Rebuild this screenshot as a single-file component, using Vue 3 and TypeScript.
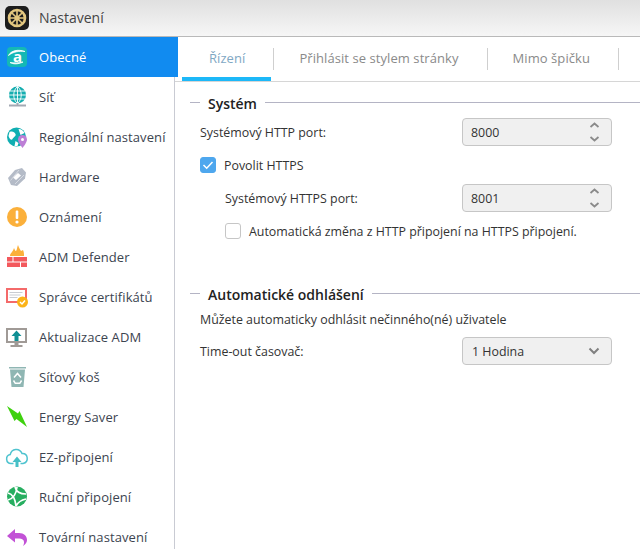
<script setup lang="ts">
const navItems = [
  { label: 'Obecné', icon: 'general', active: true },
  { label: 'Síť', icon: 'network' },
  { label: 'Regionální nastavení', icon: 'region' },
  { label: 'Hardware', icon: 'hardware' },
  { label: 'Oznámení', icon: 'notice' },
  { label: 'ADM Defender', icon: 'defender' },
  { label: 'Správce certifikátů', icon: 'cert' },
  { label: 'Aktualizace ADM', icon: 'update' },
  { label: 'Síťový koš', icon: 'trash' },
  { label: 'Energy Saver', icon: 'energy' },
  { label: 'EZ-připojení', icon: 'ez' },
  { label: 'Ruční připojení', icon: 'manual' },
  { label: 'Tovární nastavení', icon: 'factory' },
]

const tabs = [
  { label: 'Řízení', active: true },
  { label: 'Přihlásit se stylem stránky' },
  { label: 'Mimo špičku' },
]
</script>

<template>
  <div class="window">
    <header class="titlebar">
      <svg class="app-logo" width="24" height="24" viewBox="0 0 24 24">
        <rect width="24" height="24" rx="5" fill="#1c1c1c" />
        <circle cx="12" cy="12" r="8" fill="none" stroke="#e3c77f" stroke-width="2.6" />
        <circle cx="12" cy="12" r="2.6" fill="#e3c77f" />
        <path d="M12 5v14M5 12h14M7 7l10 10M17 7 7 17" stroke="#e3c77f" stroke-width="1.6" />
      </svg>
      <span>Nastavení</span>
    </header>
    <div class="body">
      <nav class="sidebar">
        <div v-for="item in navItems" :key="item.label" class="nav-item" :class="{ active: item.active }">
          <svg class="nav-icon" width="24" height="24" viewBox="0 0 24 24">
            <template v-if="item.icon === 'general'">
              <rect x="2" y="2" width="20" height="20" rx="4" fill="#14b8b5" />
              <text x="12.500" y="17" text-anchor="middle" class="icon-a">a</text>
              <path d="M3.500 10.500C6 5.500 13 4 20 6.500 14 5.800 8 6.800 3.500 10.500zM5 17.500c3 1.800 8 2 13-.5-4 1-9 1.200-13 .5z" fill="#fff" stroke="#fff" stroke-width=".8" />
            </template>
            <template v-else-if="item.icon === 'network'">
              <circle cx="12.500" cy="10" r="8.500" fill="#16aeb0" />
              <path d="M4 10h17M5 6h15M5 14h15M12.500 1.500v17M12.500 1.500c-5 4-5 13 0 17M12.500 1.500c5 4 5 13 0 17" fill="none" stroke="#fff" stroke-width=".9" />
              <path d="M12.500 18v2M4 20.500h17" stroke="#a3a9b3" stroke-width="1.800" />
            </template>
            <template v-else-if="item.icon === 'region'">
              <circle cx="11.500" cy="12" r="9.500" fill="#10aeb2" />
              <path d="M4.500 7c3-1 5 0 6 2s-2 3-3 5-3 0-4-3zM13.500 4c3 0 5 2 6 4l-4 2zM10.500 16l3 2-1 3h-3z" fill="#fff" />
              <path d="M17.500 10a4.500 4.500 0 0 1 4.500 4.500c0 3-4.500 8.500-4.500 8.500s-4.500-5.500-4.500-8.500a4.500 4.500 0 0 1 4.500-4.500z" fill="#bd7fd6" />
              <circle cx="17.500" cy="14.500" r="1.500" fill="#fff" />
            </template>
            <template v-else-if="item.icon === 'hardware'">
              <path d="M3 13 10 5l7-2 4 4.500-1 6-8 7.500-6-1z" fill="#b4bbc7" />
              <path d="M8 12.500l5-4.500 3 2.500-5 4.500z" fill="#fff" />
              <path d="M5.500 15.500 14 5M10 19l9-9" stroke="#d7dbe2" stroke-width="1" />
            </template>
            <template v-else-if="item.icon === 'notice'">
              <circle cx="12" cy="12" r="10" fill="#fbb03b" />
              <rect x="10.700" y="5.500" width="2.600" height="8.500" rx="1" fill="#fff" />
              <circle cx="12" cy="17" r="1.600" fill="#fff" />
            </template>
            <template v-else-if="item.icon === 'defender'">
              <path d="M5 11c0-3 3-4 4-8 1 2 1 3 2 3 1-1 1-4 2-6 1 3 2 4 3 6l2-1c1 2 1 4 1 6z" fill="#fbb03b" />
              <path d="M2 12h5.500v4.500H2zM8.500 12H22v4.500H8.500zM2 17.500h13V22H2zM16 17.500h6V22h-6z" fill="#f3595d" />
            </template>
            <template v-else-if="item.icon === 'cert'">
              <rect x="2" y="4" width="19" height="13" fill="#fff" stroke="#f46a6a" stroke-width="2" />
              <path d="M4.500 7.500h13M4.500 10h11M4.500 12.500h8" stroke="#c9ccd2" stroke-width="1" />
              <circle cx="17.500" cy="17" r="5.500" fill="#fbb318" />
              <path d="m15 17 2 2 3-3.500" fill="none" stroke="#fff" stroke-width="1.500" />
            </template>
            <template v-else-if="item.icon === 'update'">
              <rect x="2" y="4" width="19" height="13" fill="#fff" stroke="#a09a96" stroke-width="2" />
              <path d="M11.500 5.500 16.500 11h-3v5h-4v-5h-3z" fill="#0f8f94" />
              <path d="M9.500 18h4v2h4v2H5.500v-2h4z" fill="#a09a96" />
            </template>
            <template v-else-if="item.icon === 'trash'">
              <path d="M4 2h17v1.500H4zM5 4.500h15L18.500 22h-12z" fill="#8fb6b3" />
              <path d="M9 12.500l3.500-4 3.500 4M8.500 15.500l1.800 2.800h4.500l1.800-2.800" fill="none" stroke="#fff" stroke-width="1.500" />
            </template>
            <template v-else-if="item.icon === 'energy'">
              <path d="M2 1 13 8.500 14.500 6 22 22 11.500 14 9.500 16z" fill="#3fd10f" />
            </template>
            <template v-else-if="item.icon === 'ez'">
              <path d="M8.500 18.500H6a4.500 4.500 0 0 1-.8-8.900C6.500 3.500 14.500 2.500 17 8.500c6-.5 7.500 8.500 1 10h-2.500" fill="none" stroke="#4fc3cf" stroke-width="1.500" />
              <path d="m12 11.500 4.500 5.500h-3v5h-3v-5h-3z" fill="#45bfc6" />
            </template>
            <template v-else-if="item.icon === 'manual'">
              <circle cx="12" cy="11.500" r="10" fill="#27ae60" />
              <path d="M3 8c4 1 7 4 8 13M10 2c1 4 4 7 11 7M3 15c4-1 8-4 9-13M11 21c2-4 5-6 10-7" fill="none" stroke="#fff" stroke-width="1.700" />
            </template>
            <template v-else-if="item.icon === 'factory'">
              <path d="M10 4v4h4c5 0 8 3 8 7 0 2-1 4-4 6 1-2 1-3 1-4 0-2-2-3.500-5-3.500h-4v4L2 11z" fill="#c252d6" />
            </template>
          </svg>
          <span class="nav-label">{{ item.label }}</span>
        </div>
      </nav>
      <main class="content">
        <div class="tabs">
          <div v-for="tab in tabs" :key="tab.label" class="tab" :class="{ active: tab.active }">{{ tab.label }}</div>
        </div>
        <section class="group">
          <h2 class="legend"><span>Systém</span></h2>
          <div class="form-row">
            <label class="row-label">Systémový HTTP port:</label>
            <div class="field">
              8000
              <svg class="spin" width="11" height="24" viewBox="0 0 11 24">
                <path d="m1.500 7 4-3.500 4 3.500M1.500 17l4 3.500 4-3.500" fill="none" stroke="#8a8a8a" stroke-width="1.800" />
              </svg>
            </div>
          </div>
          <div class="check-row">
            <span class="check on">
              <svg width="16" height="16" viewBox="0 0 16 16"><path d="m3.500 8 3.200 3.200 5.800-6.200" fill="none" stroke="#fff" stroke-width="1.500" /></svg>
            </span>
            <span>Povolit HTTPS</span>
          </div>
          <div class="form-row nested">
            <label class="row-label">Systémový HTTPS port:</label>
            <div class="field">
              8001
              <svg class="spin" width="11" height="24" viewBox="0 0 11 24">
                <path d="m1.500 7 4-3.500 4 3.500M1.500 17l4 3.500 4-3.500" fill="none" stroke="#8a8a8a" stroke-width="1.800" />
              </svg>
            </div>
          </div>
          <div class="check-row nested">
            <span class="check"></span>
            <span>Automatická změna z HTTP připojení na HTTPS připojení.</span>
          </div>
        </section>
        <section class="group logout">
          <h2 class="legend"><span>Automatické odhlášení</span></h2>
          <p class="hint">Můžete automaticky odhlásit nečinného(né) uživatele</p>
          <div class="form-row">
            <label class="row-label">Time-out časovač:</label>
            <div class="field select">
              1 Hodina
              <svg class="caret" width="12" height="8" viewBox="0 0 12 8">
                <path d="m1.500 1.500 4.500 4.500 4.500-4.500" fill="none" stroke="#808080" stroke-width="2" />
              </svg>
            </div>
          </div>
        </section>
      </main>
    </div>
  </div>
</template>

<style scoped>
.window {
  width: 640px;
  height: 549px;
  overflow: hidden;
  background: #fff;
  font-family: "Open Sans", "Noto Sans", sans-serif;
  font-size: 12.4px;
  color: #333;
}

.titlebar {
  height: 37px;
  box-sizing: border-box;
  display: flex;
  align-items: center;
  gap: 10px;
  padding: 0 0 1px 5px;
  background: linear-gradient(#e0e0e0, #f6f6f6);
  border-bottom: 1px solid #b9b9b9;
  font-size: 14px;
  color: #444;
}

.app-logo {
  flex: none;
}

.body {
  display: flex;
  height: 512px;
}

.sidebar {
  width: 175px;
  flex: none;
  box-sizing: border-box;
  border-right: 1px solid #c9cbd3;
}

.nav-item {
  height: 40px;
  display: flex;
  align-items: center;
  padding-left: 5px;
  gap: 10px;
  color: #3c4450;
  font-size: 13px;
  letter-spacing: 0.08px;
}

.nav-item.active {
  background: #118bf0;
  color: #fff;
  width: 173px;
}

.nav-icon {
  flex: none;
}

.nav-label {
  white-space: nowrap;
}

.content {
  flex: 1;
  min-width: 0;
}

.tabs {
  display: flex;
  height: 45px;
  box-sizing: border-box;
  padding-left: 7px;
  border-bottom: 1px solid #d6d6d6;
}

.tab {
  position: relative;
  height: 40px;
  display: flex;
  align-items: center;
  color: #8a8a8a;
  padding: 2px 29px 0 25px;
  box-sizing: border-box;
  font-size: 13px;
  letter-spacing: 0.07px;
  white-space: nowrap;
}

.tab::before {
  content: "";
  position: absolute;
  right: 0;
  top: 11px;
  width: 1px;
  height: 22px;
  background: #cfcfcf;
}

.tab:first-child {
  padding-left: 27px;
}

.tab.active {
  color: #7fa8c4;
}

.tab.active::after {
  content: "";
  position: absolute;
  left: 0;
  right: 3px;
  bottom: -4px;
  height: 4px;
  background: #1db8f8;
}

.legend {
  margin: 12px 0 0 15px;
  font-size: 14px;
  font-weight: 600;
  color: #222;
  display: flex;
  align-items: center;
  line-height: 20px;
}

.legend::before,
.legend::after {
  content: "";
  height: 1px;
  margin-bottom: 4px;
  background: #b4b4c4;
}

.legend::before {
  width: 10px;
}

.legend::after {
  flex: 1;
}

.legend span {
  padding: 0 8px;
}

.form-row {
  display: flex;
  align-items: center;
  justify-content: space-between;
  padding: 0 28px 0 25px;
  height: 28px;
  margin-top: 4px;
}

.form-row.nested {
  padding-left: 50px;
  margin-top: 10px;
}

.field {
  width: 150px;
  height: 28px;
  box-sizing: border-box;
  border: 1px solid #c6c6c6;
  border-radius: 4px;
  background: #f0f0f0;
  display: flex;
  align-items: center;
  justify-content: space-between;
  padding: 0 11px 0 8px;
  color: #333;
}

.select {
  padding-left: 9px;
}

.check-row {
  display: flex;
  align-items: center;
  gap: 8px;
  margin: 10px 0 0 25px;
  height: 18px;
}

.check-row.nested {
  margin-left: 50px;
}

.check {
  width: 16px;
  height: 16px;
  box-sizing: border-box;
  border: 1px solid #c6c6c6;
  border-radius: 3px;
  flex: none;
}

.check.on {
  background: #4ea7ee;
  border-color: #4ea7ee;
  position: relative;
}

.check.on svg {
  position: absolute;
  left: -1px;
  top: -1px;
}

.logout {
  margin-top: 45px;
}

.logout .legend {
  margin-top: 0;
}

.hint {
  margin: 6px 0 0 25px;
  line-height: 18px;
}

.logout .form-row {
  margin-top: 8px;
}

.icon-a {
  font: 700 15px "Open Sans", sans-serif;
  fill: #fff;
}
</style>

<style>
html,
body {
  margin: 0;
  background: #fff;
}
</style>
